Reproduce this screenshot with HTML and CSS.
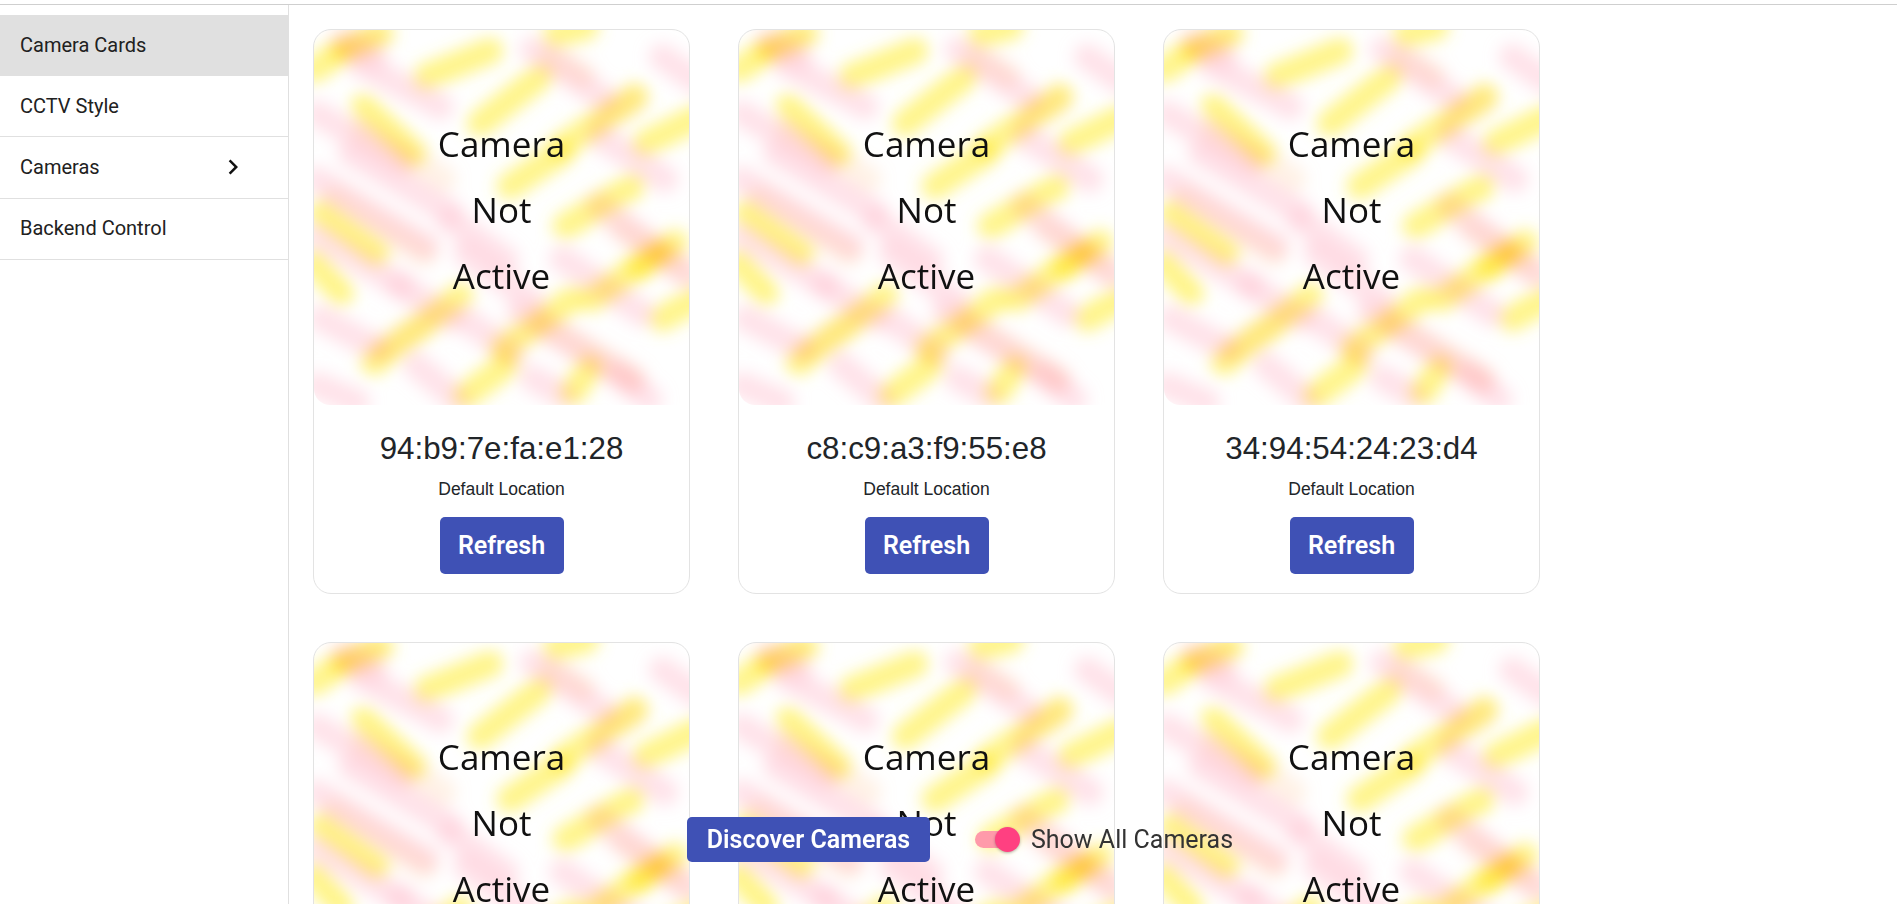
FILE: index.html
```html
<!DOCTYPE html>
<html lang="en">
<head>
<meta charset="utf-8">
<title>Camera Cards</title>
<link rel="stylesheet" href="styles.css">
</head>
<body>
<svg class="defs" width="0" height="0" aria-hidden="true">
  <defs>
    <filter id="soft" x="-20%" y="-20%" width="140%" height="140%"><feGaussianBlur stdDeviation="8"/></filter>
    <symbol id="noise" viewBox="0 0 377 377">
      <g filter="url(#soft)">
        <g class="pink">
          <path d="M47 34 L127 77"/><path d="M220 20 L293 70"/><path d="M350 27 L385 52"/>
          <path d="M3 84 L87 134"/><path d="M3 150 L113 217"/><path d="M3 207 L87 257"/><path d="M7 290 L63 320"/>
          <path d="M3 357 L43 374"/><path d="M103 337 L143 371"/><path d="M207 284 L320 354"/><path d="M307 347 L337 371"/>
          <path d="M220 350 L250 367"/><path d="M87 257 L137 290"/><path d="M153 224 L220 274"/><path d="M287 177 L377 247"/>
          <path d="M287 107 L353 150"/><path d="M37 124 L137 184"/><path d="M137 191 L193 231"/>
          <path d="M150 290 L200 325"/><path d="M250 230 L330 285"/><path d="M30 12 L60 28"/>
        </g>
        <g class="yellow">
          <path d="M0 40 L23 24"/><path d="M30 20 L67 4"/><path d="M113 47 L177 21"/><path d="M167 94 L227 47"/>
          <path d="M243 4 L273 -3"/><path d="M250 117 L323 67"/><path d="M197 157 L247 124"/><path d="M0 234 L27 264"/>
          <path d="M60 334 L147 267"/><path d="M153 367 L193 337"/><path d="M260 364 L277 340"/><path d="M350 290 L385 270"/>
          <path d="M327 237 L363 214"/><path d="M253 197 L320 157"/><path d="M7 184 L63 224"/><path d="M50 77 L100 124"/>
          <path d="M333 114 L385 88"/><path d="M280 270 L345 225"/><path d="M190 320 L260 270"/>
        </g>
        <g class="peach">
          <path d="M50 100 L130 150"/><path d="M20 170 L110 225"/><path d="M240 25 L270 45"/><path d="M290 90 L320 70"/>
          <path d="M230 295 L320 350"/><path d="M70 320 L110 295"/><path d="M310 200 L370 240"/><path d="M40 15 L60 8"/>
        </g>
      </g>
    </symbol>
    <symbol id="chevron" viewBox="0 0 24 24">
      <path d="M8.59 16.59 13.17 12 8.59 7.41 10 6l6 6-6 6z"/>
    </symbol>
  </defs>
</svg>

<div class="topbar"></div>
<div class="layout">
  <nav class="sidebar">
    <a class="nav-item nav-active">Camera Cards</a>
    <a class="nav-item">CCTV Style</a>
    <a class="nav-item nav-expand">Cameras<svg class="chevron"><use href="#chevron"/></svg></a>
    <a class="nav-item">Backend Control</a>
  </nav>
  <main class="content">
    <div class="grid">
      <article class="card">
        <div class="thumb"><svg class="noise"><use href="#noise"/></svg><div class="thumb-text"><span>Camera</span><span>Not</span><span>Active</span></div></div>
        <div class="card-body"><h2 class="mac">94:b9:7e:fa:e1:28</h2><p class="loc">Default Location</p><button class="btn btn-refresh">Refresh</button></div>
      </article>
      <article class="card">
        <div class="thumb"><svg class="noise"><use href="#noise"/></svg><div class="thumb-text"><span>Camera</span><span>Not</span><span>Active</span></div></div>
        <div class="card-body"><h2 class="mac">c8:c9:a3:f9:55:e8</h2><p class="loc">Default Location</p><button class="btn btn-refresh">Refresh</button></div>
      </article>
      <article class="card">
        <div class="thumb"><svg class="noise"><use href="#noise"/></svg><div class="thumb-text"><span>Camera</span><span>Not</span><span>Active</span></div></div>
        <div class="card-body"><h2 class="mac">34:94:54:24:23:d4</h2><p class="loc">Default Location</p><button class="btn btn-refresh">Refresh</button></div>
      </article>
      <article class="card">
        <div class="thumb"><svg class="noise"><use href="#noise"/></svg><div class="thumb-text"><span>Camera</span><span>Not</span><span>Active</span></div></div>
      </article>
      <article class="card">
        <div class="thumb"><svg class="noise"><use href="#noise"/></svg><div class="thumb-text"><span>Camera</span><span>Not</span><span>Active</span></div></div>
      </article>
      <article class="card">
        <div class="thumb"><svg class="noise"><use href="#noise"/></svg><div class="thumb-text"><span>Camera</span><span>Not</span><span>Active</span></div></div>
      </article>
    </div>
  </main>
</div>
<div class="floatbar">
  <button class="btn btn-discover">Discover Cameras</button>
  <label class="toggle"><span class="track"><span class="knob"></span></span><span class="toggle-label">Show All Cameras</span></label>
</div>
</body>
</html>
```
FILE: styles.css
```css
* { box-sizing: border-box; }
html, body { margin: 0; height: 100%; overflow: hidden; background: #fff; }
body { font-family: Roboto, "Liberation Sans", sans-serif; color: #212529; display: flex; flex-direction: column; }
.defs { display: block; height: 0; }
.topbar { height: 5px; flex: none; border-bottom: 1px solid #cfcfcf; }
.layout { flex: 1; display: flex; min-height: 0; }
.sidebar { width: 289px; flex: none; border-right: 1px solid #e0e0e0; padding-top: 10px; }
.nav-item { display: flex; align-items: center; height: 61.2px; padding: 0 0 1px 20px; font-size: 20px; color: #212121; border-bottom: 1px solid #e0e0e0; }
.nav-active { background: #e0e0e0; border-bottom: 0; padding-bottom: 2px; }
.chevron { width: 30px; height: 30px; margin-left: 118px; fill: #111; flex: none; }
.content { flex: 1; padding: 24px 24px 0; min-width: 0; }
.grid { display: grid; grid-template-columns: repeat(3, 377px); column-gap: 48px; row-gap: 48px; align-items: start; }
.card { border: 1px solid #e3e3e3; border-radius: 18px; overflow: hidden; min-height: 565px; background: #fff; }
.thumb { display: grid; width: 100%; height: 375px; border-radius: 0 0 16px 16px; overflow: hidden; }
.noise { grid-area: 1 / 1; width: 100%; height: 100%; display: block; }
.thumb-text { grid-area: 1 / 1; z-index: 1; display: flex; flex-direction: column; align-items: center; justify-content: center; gap: 16px; padding-bottom: 16px; font-family: "Open Sans", "Noto Sans", sans-serif; font-size: 35px; line-height: 50px; color: #111; }
.pink path, .yellow path, .peach path { fill: none; stroke-width: 27; stroke-linecap: round; }
.pink path { stroke: #ffc8d6; opacity: .5; }
.yellow path { stroke: #fff04d; opacity: .66; mix-blend-mode: multiply; }
.peach path { stroke: #ffc896; opacity: .24; mix-blend-mode: multiply; }
.card-body { display: flex; flex-direction: column; align-items: center; padding-top: 26px; }
.mac { margin: 0; font-family: "Liberation Sans", Arial, sans-serif; font-weight: 400; font-size: 31.3px; line-height: 36px; }
.loc { margin: 12px 0 0; font-family: "Liberation Sans", Arial, sans-serif; font-size: 17.5px; line-height: 20px; }
.btn { border: 0; background: #3f51b5; color: #fff; font-family: Roboto, sans-serif; font-weight: 600; border-radius: 5px; padding: 0; }
.btn-refresh { margin-top: 18px; width: 124px; height: 57px; font-size: 25px; }
.floatbar { position: fixed; z-index: 5; left: 687px; top: 817px; display: flex; align-items: center; gap: 45px; }
.btn-discover { width: 243px; height: 45px; font-size: 25px; }
.toggle { display: flex; align-items: center; gap: 16px; }
.track { display: flex; align-items: center; flex: none; width: 40px; height: 17px; border-radius: 9px; background: #ff9aaa; }
.knob { flex: none; width: 25px; height: 25px; border-radius: 50%; background: #ff4081; margin-left: 20px; box-shadow: 0 1px 3px rgba(0,0,0,.3); }
.toggle-label { font-size: 25px; color: #333; }
```
